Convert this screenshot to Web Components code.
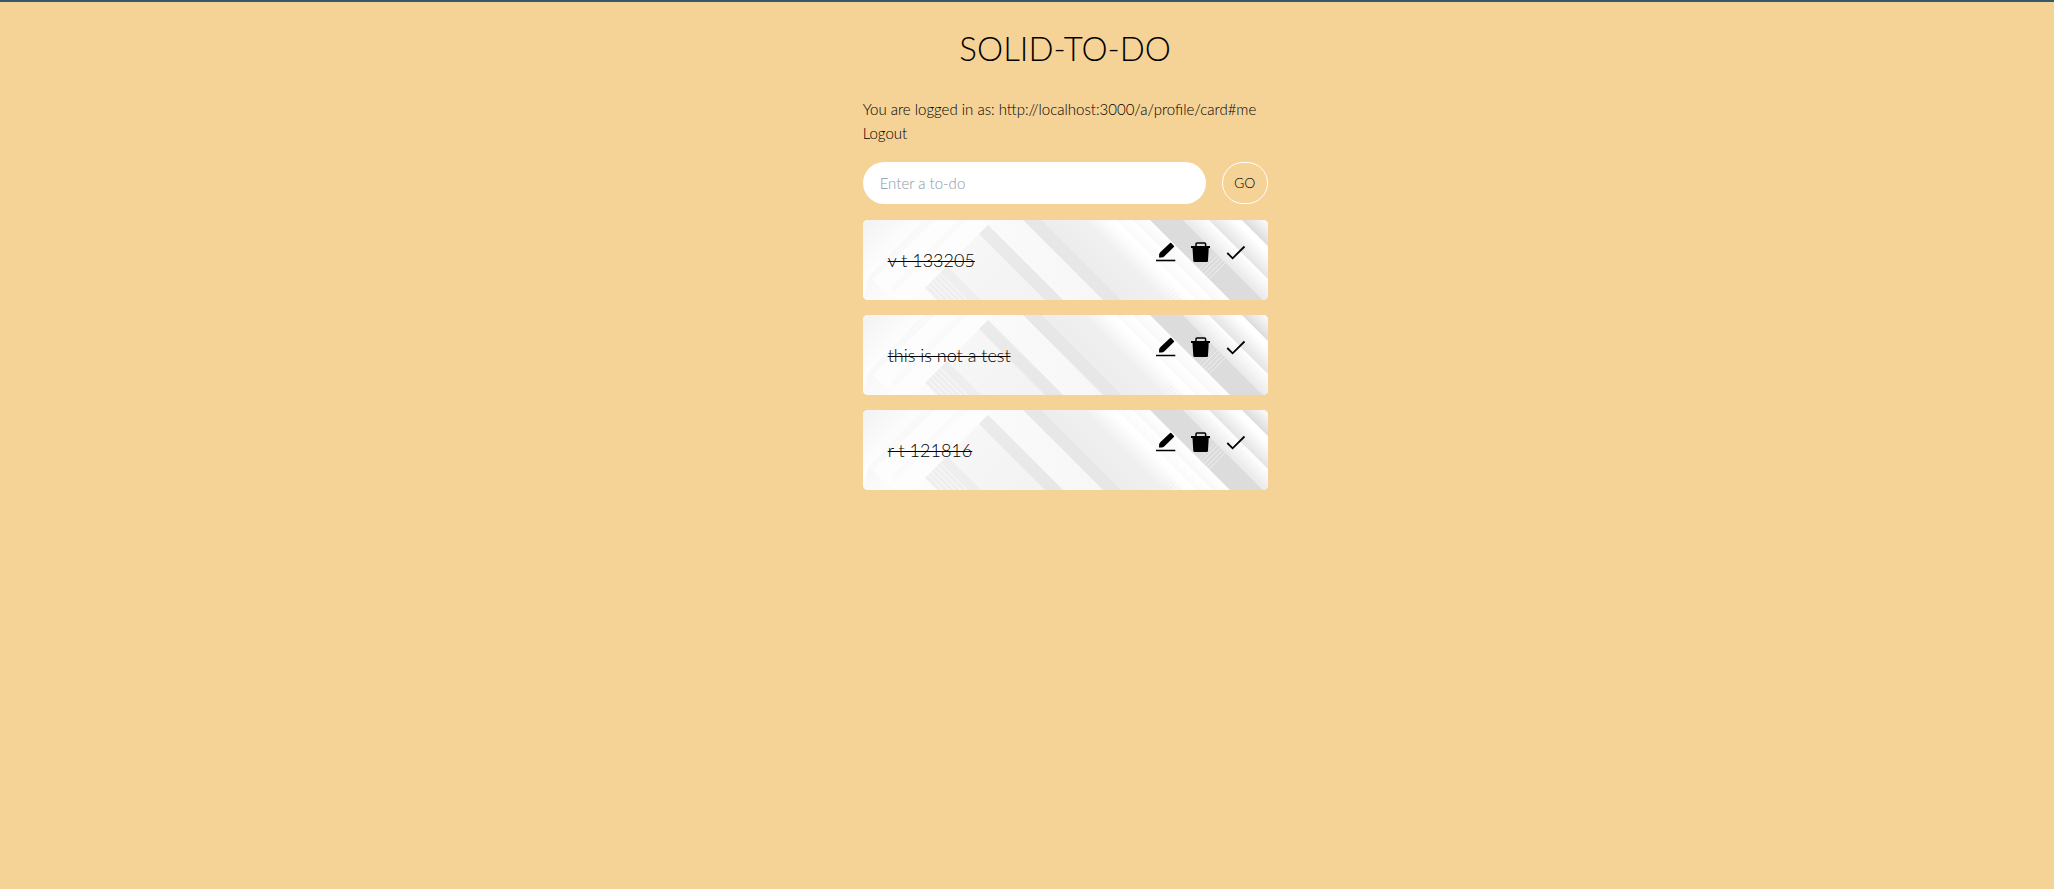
<!DOCTYPE html>
<html lang="en">
<head>
<meta charset="utf-8">
<title>SOLID-TO-DO</title>
<style>
html { background: #f5d296; border-top: 2px solid #37586b; }
body { margin: 0; font: 300 15px/24px Lato, "Open Sans", sans-serif; color: #000; }
</style>
</head>
<body>
<todo-app>
  <session-info webid="http://localhost:3000/a/profile/card#me"></session-info>
  <todo-form></todo-form>
  <todo-item>v t 133205</todo-item>
  <todo-item>this is not a test</todo-item>
  <todo-item>r t 121816</todo-item>
</todo-app>
<script>
class TodoApp extends HTMLElement {
  constructor() {
    super();
    this.attachShadow({ mode: 'open' }).innerHTML = `
      <style>
        :host { display: block; padding: 22px 16px 32px 42%; }
        main { display: flex; flex-direction: column; gap: 15px; max-width: 405px; }
        h1 { margin: 0 0 10px; font-size: 33px; line-height: 48px; font-weight: 300; text-align: center; }
      </style>
      <main><h1>SOLID-TO-DO</h1><slot></slot></main>`;
  }
}
customElements.define('todo-app', TodoApp);

class SessionInfo extends HTMLElement {
  connectedCallback() {
    this.attachShadow({ mode: 'open' }).innerHTML = `
      <style>
        :host { display: block; padding-bottom: 2px; }
        p { margin: 0; }
        a { color: inherit; text-decoration: none; }
      </style>
      <p>You are logged in as: <span></span></p>
      <a href="#logout">Logout</a>`;
    this.shadowRoot.querySelector('span').textContent = this.getAttribute('webid');
  }
}
customElements.define('session-info', SessionInfo);

class TodoForm extends HTMLElement {
  constructor() {
    super();
    this.attachShadow({ mode: 'open' }).innerHTML = `
      <style>
        :host { display: block; padding-bottom: 1px; }
        form { display: flex; gap: 16px; margin: 0; }
        input, button { box-sizing: border-box; height: 42px; border-radius: 21px; font: inherit; color: inherit; }
        input { flex: 1; min-width: 0; border: 0; padding: 0 17px; background: #fff; outline: 0; }
        input::placeholder { color: #8e97a6; opacity: 1; }
        button { width: 46px; padding: 0; border: 1px solid #fff; background: none; font-size: 14px; }
      </style>
      <form>
        <input type="text" aria-label="To-do" placeholder="Enter a to-do">
        <button type="button">GO</button>
      </form>`;
  }
}
customElements.define('todo-form', TodoForm);

class CardPattern extends HTMLElement {
  constructor() {
    super();
    this.attachShadow({ mode: 'open' }).innerHTML = `
      <style>
        :host { display: block; }
        svg { display: block; width: 100%; height: 100%; }
      </style>
      <svg viewBox="0 0 405 80" preserveAspectRatio="xMidYMid slice" aria-hidden="true">
        <defs>
          <linearGradient id="base"><stop offset="0" stop-color="#fdfdfd"/><stop offset=".4" stop-color="#f9f9f9"/><stop offset="1" stop-color="#f3f3f4"/></linearGradient>
          <linearGradient id="corner" gradientUnits="userSpaceOnUse" x1="0" y1="0" x2="36" y2="36"><stop stop-color="#f2f2f2"/><stop offset="1" stop-color="#fff"/></linearGradient>
          <linearGradient id="left" gradientUnits="userSpaceOnUse" x1="10" y1="60" x2="40" y2="90"><stop stop-color="#f8f8f8"/><stop offset="1" stop-color="#fff"/></linearGradient>
          <linearGradient id="inner" gradientUnits="userSpaceOnUse" x1="100" y1="30" x2="150" y2="80"><stop stop-color="#f7f7f7"/><stop offset="1" stop-color="#f3f3f3"/></linearGradient>
          <linearGradient id="band" gradientUnits="userSpaceOnUse" x1="120" y1="0" x2="200" y2="80"><stop stop-color="#ebebeb"/><stop offset="1" stop-color="#e7e7e7"/></linearGradient>
          <linearGradient id="m" gradientUnits="userSpaceOnUse" x1="179" y1="0" x2="198" y2="-19"><stop stop-color="#ededee"/><stop offset="1" stop-color="#f0f0f1"/></linearGradient>
          <linearGradient id="a" gradientUnits="userSpaceOnUse" x1="217" y1="0" x2="236" y2="-19"><stop stop-color="#eeeeef"/><stop offset=".8" stop-color="#fff"/></linearGradient>
          <linearGradient id="b" gradientUnits="userSpaceOnUse" x1="254" y1="0" x2="262" y2="-8"><stop stop-color="#fafafa"/><stop offset="1" stop-color="#fff"/></linearGradient>
          <linearGradient id="c" gradientUnits="userSpaceOnUse" x1="270" y1="0" x2="279" y2="-9"><stop stop-color="#f8f8f8"/><stop offset="1" stop-color="#fff"/></linearGradient>
          <linearGradient id="d" gradientUnits="userSpaceOnUse" x1="320" y1="0" x2="333" y2="-13"><stop stop-color="#e9e9e9"/><stop offset="1" stop-color="#fff"/></linearGradient>
          <linearGradient id="e" gradientUnits="userSpaceOnUse" x1="346" y1="0" x2="362" y2="-16"><stop stop-color="#e4e4e4"/><stop offset=".8" stop-color="#fff"/></linearGradient>
          <linearGradient id="f" gradientUnits="userSpaceOnUse" x1="379" y1="0" x2="392" y2="-13"><stop stop-color="#dcdcdc"/><stop offset="1" stop-color="#fff"/></linearGradient>
          <pattern id="rays" width="6" height="6" patternUnits="userSpaceOnUse"><path d="M-1 -1L7 7M-1 5L1 7M5 -1L7 1" stroke="#fff" stroke-width="1.3" opacity=".5"/></pattern>
          <pattern id="hatch" width="5" height="5" patternUnits="userSpaceOnUse"><path d="M-1 6L6 -1M-1 1L1 -1M4 6L6 4" stroke="#eee" stroke-width="1"/></pattern>
        </defs>
        <rect width="405" height="80" fill="url(#base)"/>
        <path d="M0 0H60L0 60Z" fill="url(#corner)"/>
        <path d="M60 0H72L12 60L6 56Z" fill="#f9f9f9"/>
        <path d="M72 0H131L51 80H26L10 60Z" fill="#fdfdfd"/>
        <path d="M95 0H104L32 72L28 67Z" fill="#fafafa"/>
        <path d="M6 56L30 80H0Z" fill="url(#left)"/>
        <path d="M125 5L62 68L74 80H200Z" fill="url(#inner)"/>
        <path d="M84 46L62 68L74 80H118Z" fill="#eeeeee"/>
        <path d="M78 52L62 68L74 80H106Z" fill="url(#rays)"/>
        <path d="M125 5L116 14L182 80H200Z" fill="url(#band)"/>
        <path d="M160 0H179L259 80H240Z" fill="#e7e7e7"/>
        <path d="M179 0H217L297 80H259Z" fill="url(#m)"/>
        <path d="M217 0H254L334 80H297Z" fill="url(#a)"/>
        <path d="M254 0H270L350 80H334Z" fill="url(#b)"/>
        <path d="M270 0H287L367 80H350Z" fill="url(#c)"/>
        <path d="M287 0H320L400 80H367Z" fill="#dcdcdc"/>
        <path d="M320 0H346L405 59V80H400Z" fill="url(#d)"/>
        <path d="M346 0H379L405 26V59Z" fill="url(#e)"/>
        <path d="M379 0H405V26Z" fill="url(#f)"/>
        <path d="M336 49L348 61L364 45L352 33Z" fill="url(#hatch)"/>
        <path d="M307 68L295 80H319Z" fill="url(#hatch)"/>
      </svg>`;
  }
}
customElements.define('card-pattern', CardPattern);

class TodoItem extends HTMLElement {
  constructor() {
    super();
    this.attachShadow({ mode: 'open' }).innerHTML = `
      <style>
        :host { display: grid; min-height: 80px; border-radius: 5px; overflow: hidden; background: #fff; }
        card-pattern, .row { grid-area: 1 / 1; min-width: 0; }
        card-pattern { height: 80px; }
        .row { position: relative; display: flex; justify-content: space-between; padding: 22px 22px 0 25px; }
        .text { font-size: 18px; line-height: 36px; text-decoration: line-through; text-decoration-thickness: 1px; }
        .actions { display: flex; gap: 15px; height: 20px; }
        button { width: 20px; height: 20px; padding: 0; border: 0; background: none; }
        svg { display: block; width: 20px; height: 20px; }
      </style>
      <card-pattern></card-pattern>
      <div class="row">
        <span class="text"><slot></slot></span>
        <div class="actions">
          <button aria-label="Edit"><svg viewBox="0 0 20 20"><path d="M0 17.7H19.3V19.3H0Z"/><path d="M3 15.5L3.2 12.2Q3.5 11 4.5 10L14.3 .8Q14.8.5 15.3 1L18 4Q18.3 4.5 17.9 5L8.2 14.4Q7 15.5 5.6 15.6Z"/></svg></button>
          <button aria-label="Delete"><svg viewBox="0 0 20 20"><path d="M1.5 6H17.7L17 18.8Q16.9 20 15.8 20H3.6Q2.4 20 2.3 18.8Z"/><path d="M0 4H19V6H0Z"/><path d="M5 4.5V2Q5 1 6 1H13.6Q14.6 1 14.6 2V4.5" fill="none" stroke="#000" stroke-width="1.5"/></svg></button>
          <button aria-label="Done"><svg viewBox="0 0 20 20"><path d="M1.3 11L6.6 16.3L18.5 4.5" fill="none" stroke="#000" stroke-width="1.8"/></svg></button>
        </div>
      </div>`;
  }
}
customElements.define('todo-item', TodoItem);
</script>
</body>
</html>
